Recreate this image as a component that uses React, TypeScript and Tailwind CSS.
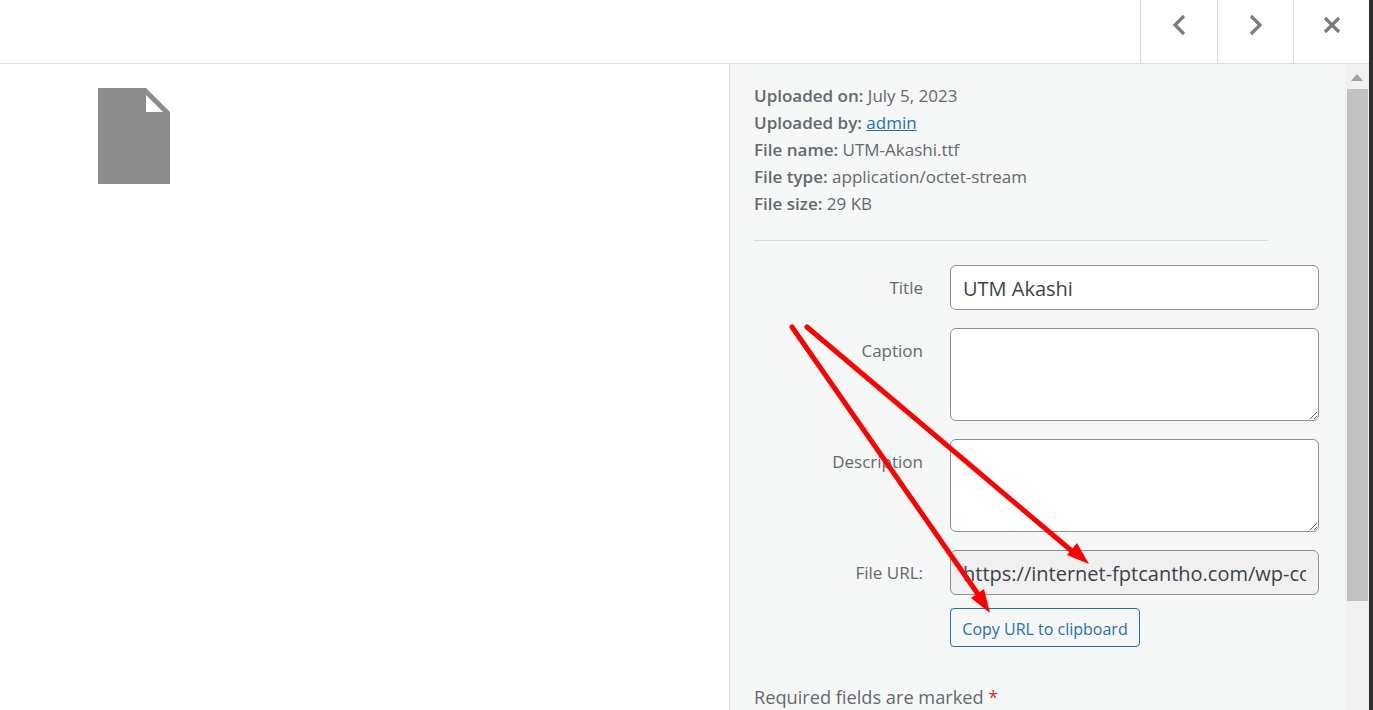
const font = 'font-["Open_Sans","Noto_Sans",sans-serif]';

function Meta({ label, children }: { label: string; children: React.ReactNode }) {
  return (
    <div className="h-[27px] leading-[27px] whitespace-nowrap">
      <strong className="font-semibold">{label}</strong> {children}
    </div>
  );
}

function NavButton({ width, children }: { width: string; children: React.ReactNode }) {
  return (
    <button className={`${width} h-[63px] border-l border-[#dcdcde] flex justify-center pt-[13px]`}>
      <svg width="24" height="24" viewBox="0 0 24 24" fill="none" stroke="#787c82" strokeWidth="3.2">
        {children}
      </svg>
    </button>
  );
}

function Field({ label, className, labelClass, children }: { label: string; className: string; labelClass?: string; children: React.ReactNode }) {
  return (
    <div className={`flex ${className}`}>
      <label className={`w-[169px] text-right text-[17px] leading-[27px] text-[#646970] shrink-0 ${labelClass ?? ''}`}>{label}</label>
      <div className="ml-[27px] w-[369px]">{children}</div>
    </div>
  );
}

export default function App() {
  return (
    <div className={`relative h-[710px] w-[1373px] overflow-hidden bg-white flex ${font}`}>
      <div className="w-[1369px] flex flex-col">
        <header className="h-[64px] shrink-0 border-b border-[#dcdcde] flex justify-end bg-white">
          <NavButton width="w-[77px]">
            <path d="M17 3 L8 12 L17 21" />
          </NavButton>
          <NavButton width="w-[76px]">
            <path d="M7 3 L16 12 L7 21" />
          </NavButton>
          <NavButton width="w-[76px]">
            <path d="M5 5 L19 19 M19 5 L5 19" />
          </NavButton>
        </header>

        <div className="flex flex-1 min-h-0">
          <div className="w-[729px] shrink-0 pl-[98px] pt-[24px]">
            <svg width="72" height="96" viewBox="0 0 72 96">
              <path d="M0 0 H48 L72 24 V96 H0 Z" fill="#8c8c8c" />
              <path d="M48 7 V24 H65 Z" fill="#ffffff" />
            </svg>
          </div>

          <aside className="flex-1 flex border-l border-[#dcdcde] bg-[#f6f7f7] min-w-0">
            <div className="flex-1 pl-[24px] pt-[18px] text-[17px] text-[#646970] overflow-hidden">
              <Meta label="Uploaded on:">July 5, 2023</Meta>
              <Meta label="Uploaded by:">
                <a className="text-[#2271b1] underline">admin</a>
              </Meta>
              <Meta label="File name:">UTM-Akashi.ttf</Meta>
              <Meta label="File type:">application/octet-stream</Meta>
              <Meta label="File size:">29 KB</Meta>

              <div className="w-[514px] h-px bg-[#dcdcde] mt-[23px]" />

              <div className="mt-[24px]">
                <Field label="Title" className="h-[45px] items-center">
                  <input
                    readOnly
                    value="UTM Akashi"
                    className="block w-full h-[45px] rounded-[6px] border border-[#8c8f94] bg-white px-[12px] pt-[2px] text-[20px] text-[#3c434a] outline-none"
                  />
                </Field>
                <Field label="Caption" className="mt-[18px]" labelClass="pt-[9px]">
                  <textarea readOnly className="block w-full h-[93px] rounded-[6px] border border-[#8c8f94] bg-white outline-none" />
                </Field>
                <Field label="Description" className="mt-[18px]" labelClass="pt-[9px]">
                  <textarea readOnly className="block w-full h-[93px] rounded-[6px] border border-[#8c8f94] bg-white outline-none" />
                </Field>
                <Field label="File URL:" className="mt-[18px] items-center">
                  <input
                    readOnly
                    value="https://internet-fptcantho.com/wp-content/uploads/2023/07/UTM-Akashi.ttf"
                    className="block w-full h-[45px] rounded-[6px] border border-[#8c8f94] bg-[#f0f0f1] px-[12px] pt-[2px] text-[20px] text-[#3c434a] outline-none"
                  />
                </Field>
                <div className="mt-[13px] ml-[196px]">
                  <button className="h-[39px] w-[190px] pt-[3px] rounded-[4px] border border-[#2271b1] text-[#2271b1] text-[16px] leading-[33px] whitespace-nowrap">
                    Copy URL to clipboard
                  </button>
                </div>
              </div>

              <p className="mt-[37px] text-[18.2px] leading-[27px] whitespace-nowrap">
                Required fields are marked <span className="text-[#d63638]">*</span>
              </p>
            </div>

            <div className="w-[24px] shrink-0 bg-[#f1f1f1] flex flex-col items-center">
              <svg className="mt-[10px]" width="12" height="7" viewBox="0 0 12 7">
                <path d="M6 0 L12 7 H0 Z" fill="#a3a3a3" />
              </svg>
              <div className="mt-[8px] w-[21px] h-[512px] bg-[#c1c1c1]" />
            </div>
          </aside>
        </div>
      </div>
      <div className="w-[4px] bg-[#2e2e2e]" />

      {/* red annotation arrows */}
      <svg className="absolute inset-0 pointer-events-none" width="1373" height="710" viewBox="0 0 1373 710" fill="none">
        <path d="M792 327 L980 597" stroke="#ff0000" strokeWidth="5" strokeLinecap="round" />
        <path d="M807 327 L1073 552" stroke="#ff0000" strokeWidth="5" strokeLinecap="round" />
        <path d="M990 613 L971 598 L984 589 Z" fill="#ff0000" />
        <path d="M1089 564 L1067 555 L1077 543 Z" fill="#ff0000" />
      </svg>
    </div>
  );
}
